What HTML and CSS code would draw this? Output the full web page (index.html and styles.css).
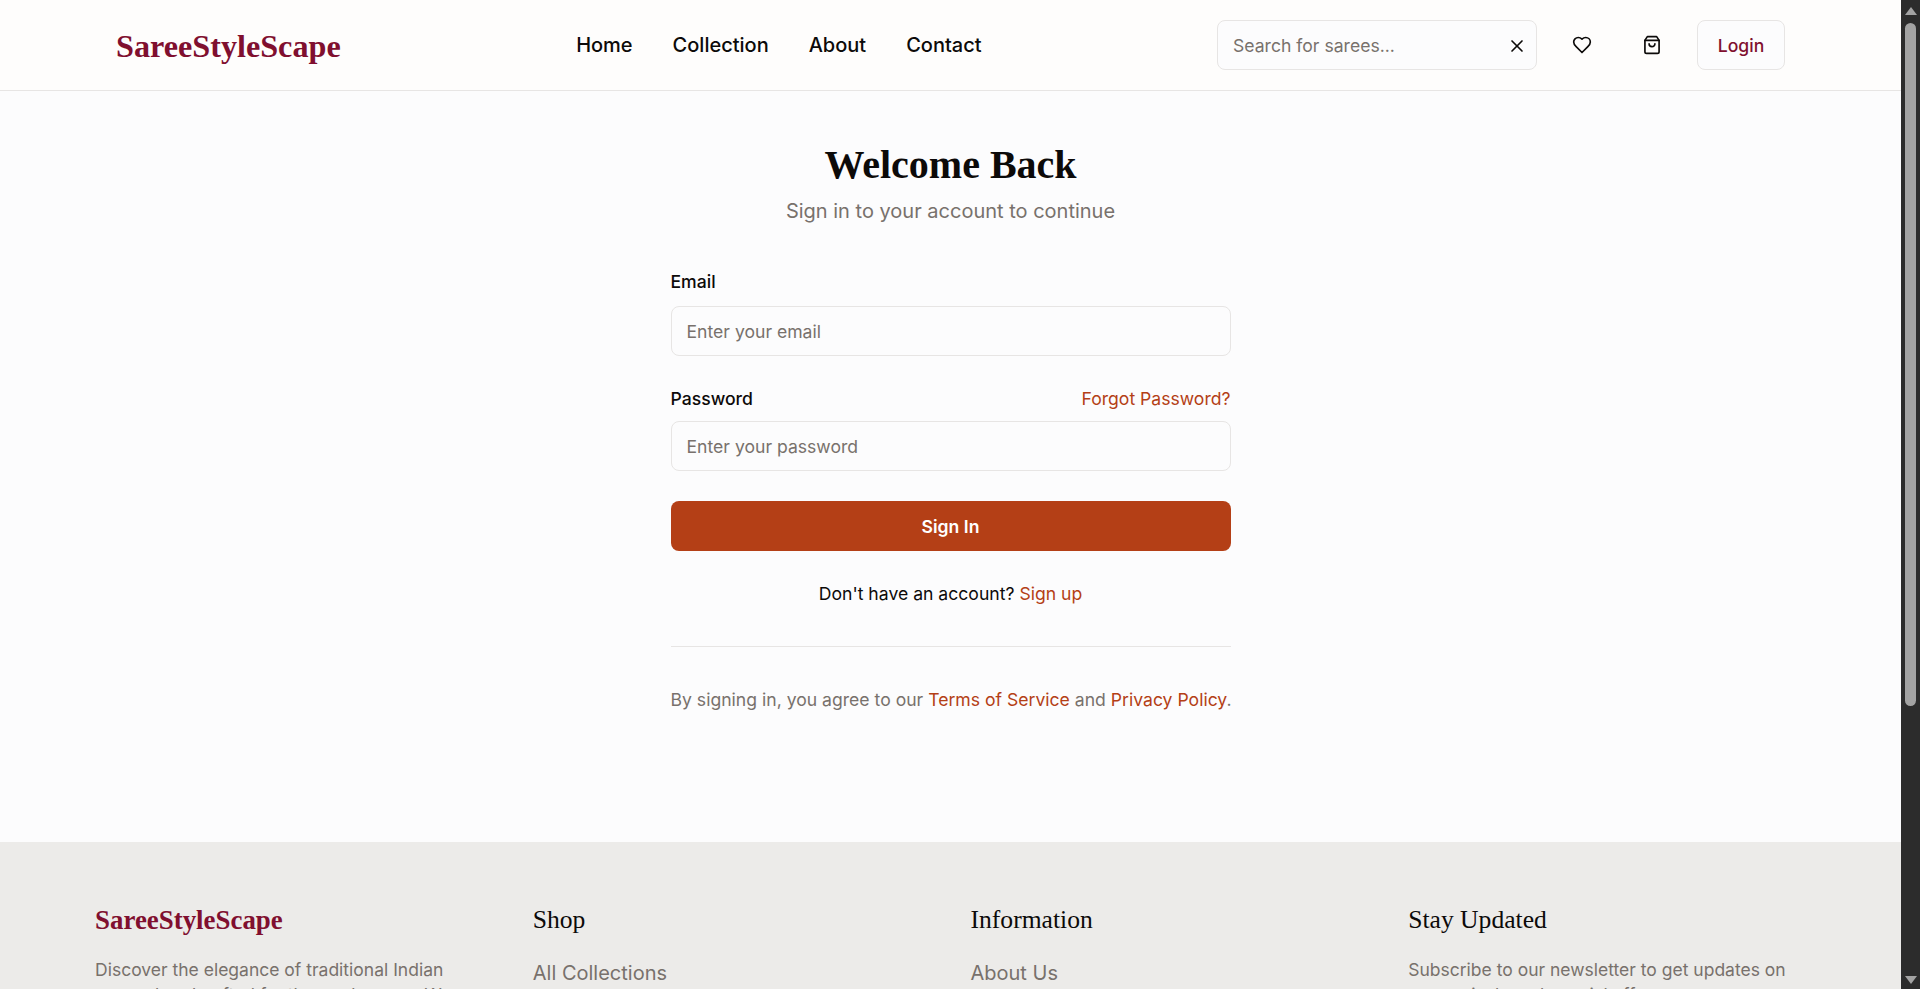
FILE: index.html
```html
<!DOCTYPE html>
<html lang="en">
<head>
<meta charset="utf-8">
<title>SareeStyleScape - Login</title>
<link rel="stylesheet" href="styles.css">
</head>
<body>
<div class="viewport">
  <div class="page">
    <header class="site-header">
      <a class="logo" href="#">SareeStyleScape</a>
      <nav class="main-nav">
        <a href="#">Home</a>
        <a href="#">Collection</a>
        <a href="#">About</a>
        <a href="#">Contact</a>
      </nav>
      <div class="header-actions">
        <div class="search-box">
          <span class="search-placeholder">Search for sarees...</span>
          <svg class="icon-x" viewBox="0 0 24 24" fill="none" stroke="currentColor" stroke-width="2" stroke-linecap="round" stroke-linejoin="round"><path d="M18 6 6 18"/><path d="m6 6 12 12"/></svg>
        </div>
        <button class="icon-btn heart-btn" aria-label="Wishlist">
          <svg viewBox="0 0 24 24" fill="none" stroke="currentColor" stroke-width="2" stroke-linecap="round" stroke-linejoin="round"><path d="M19 14c1.49-1.46 3-3.21 3-5.5A5.5 5.5 0 0 0 16.5 3c-1.76 0-3 .5-4.500 2-1.500-1.500-2.740-2-4.500-2A5.500 5.500 0 0 0 2 8.500c0 2.300 1.500 4.050 3 5.500l7 7Z"/></svg>
        </button>
        <button class="icon-btn bag-btn" aria-label="Cart">
          <svg viewBox="0 0 24 24" fill="none" stroke="currentColor" stroke-width="2" stroke-linecap="round" stroke-linejoin="round"><path d="M7 2h10a1 1 0 0 1 1 .6L20.500 6.500V20a2 2 0 0 1-2 2h-13a2 2 0 0 1-2-2V6.500L6 2.600A1 1 0 0 1 7 2Z"/><path d="M3.500 6.500h17"/><path d="M15.500 10.500a3.500 3.500 0 0 1-7 0"/></svg>
        </button>
        <button class="login-btn">Login</button>
      </div>
    </header>

    <main class="login-main">
      <section class="login-card">
        <h1>Welcome Back</h1>
        <p class="subtitle">Sign in to your account to continue</p>
        <form class="login-form">
          <div class="field">
            <div class="label-row"><label for="email">Email</label></div>
            <input id="email" type="email" placeholder="Enter your email">
          </div>
          <div class="field">
            <div class="label-row"><label for="password">Password</label><a href="#" class="accent">Forgot Password?</a></div>
            <input id="password" type="password" placeholder="Enter your password">
          </div>
          <button type="button" class="submit-btn">Sign In</button>
        </form>
        <p class="signup-line">Don't have an account? <a href="#" class="accent">Sign up</a></p>
        <hr class="divider">
        <p class="terms">By signing in, you agree to our <a href="#" class="accent">Terms of Service</a> and <a href="#" class="accent">Privacy Policy</a>.</p>
      </section>
    </main>

    <footer class="site-footer">
      <div class="footer-grid">
        <div class="footer-col">
          <h2 class="footer-logo">SareeStyleScape</h2>
          <p class="footer-text">Discover the elegance of traditional Indian sarees handcrafted for the modern era. We</p>
        </div>
        <div class="footer-col">
          <h3>Shop</h3>
          <ul><li><a href="#">All Collections</a></li><li><a href="#">New Arrivals</a></li></ul>
        </div>
        <div class="footer-col">
          <h3>Information</h3>
          <ul><li><a href="#">About Us</a></li><li><a href="#">Contact</a></li></ul>
        </div>
        <div class="footer-col">
          <h3>Stay Updated</h3>
          <p class="footer-text">Subscribe to our newsletter to get updates on new arrivals and special offers.</p>
        </div>
      </div>
    </footer>
  </div>

  <div class="scrollbar" aria-hidden="true">
    <span class="arrow arrow-up"></span>
    <span class="thumb"></span>
    <span class="arrow arrow-down"></span>
  </div>
</div>
</body>
</html>
```

FILE: styles.css
```css
* { box-sizing: border-box; }

html, body {
  margin: 0;
  height: 100%;
  overflow: hidden;
}

body {
  font-family: Inter, "Liberation Sans", sans-serif;
  font-size: 17.6px;
  line-height: 24px;
  color: #0c0a09;
  background: #fcfcfd;
}

a { color: inherit; text-decoration: none; }

.viewport {
  display: flex;
  height: 100vh;
}

.page {
  flex: 1;
  min-width: 0;
  overflow: hidden;
}

/* Header */
.site-header {
  display: flex;
  align-items: center;
  justify-content: space-between;
  height: 91px;
  padding: 0 116px;
  background: #fefdfc;
  border-bottom: 1px solid #e7e5e4;
}

.logo {
  font-family: "Liberation Serif", serif;
  font-weight: 700;
  font-size: 32.2px;
  line-height: 40px;
  color: #800f2f;
  margin-top: 1px;
}

.main-nav {
  display: flex;
  gap: 40px;
  font-size: 20px;
  font-weight: 500;
}

.header-actions {
  display: flex;
  align-items: center;
}

.search-box {
  display: flex;
  align-items: center;
  justify-content: space-between;
  width: 320px;
  height: 50px;
  padding: 1px 9px 0 15px;
  background: #fcfcfd;
  border: 1px solid #e7e5e4;
  border-radius: 8px;
}

.search-placeholder { color: #78716c; }

.icon-x { width: 20px; height: 20px; }

.icon-btn {
  display: flex;
  align-items: center;
  justify-content: center;
  width: 40px;
  height: 40px;
  padding: 0;
  color: #0c0a09;
  background: none;
  border: 0;
}

.icon-btn svg { width: 20px; height: 20px; }

.heart-btn { margin: -1px 0 0 25px; }
.bag-btn { margin: 0 25px 0 30px; }

.login-btn {
  width: 88px;
  height: 50px;
  padding: 0;
  font: 500 17.6px Inter, sans-serif;
  color: #800f2f;
  background: #fcfcfd;
  border: 1px solid #e7e5e4;
  border-radius: 8px;
}

/* Login */
.login-main {
  height: 751px;
  padding-top: 51px;
}

.login-card {
  width: 560px;
  margin: 0 auto;
  text-align: center;
}

h1 {
  margin: 0;
  font-family: "Liberation Serif", serif;
  font-size: 40px;
  font-weight: 700;
  line-height: 46px;
}

.subtitle {
  margin: 9px 0 0;
  font-size: 20px;
  line-height: 28px;
  color: #78716c;
}

.login-form {
  margin-top: 45px;
  text-align: left;
}

.field { margin-bottom: 30px; }

.field:first-child { margin-bottom: 31px; }

.label-row {
  display: flex;
  justify-content: space-between;
  margin-bottom: 10px;
}

.field:first-child .label-row { margin-bottom: 12px; }

label { font-weight: 500; }

.accent { color: #b43f16; }

input {
  display: block;
  width: 100%;
  height: 50px;
  padding: 0 15px;
  font: 400 17.6px Inter, sans-serif;
  color: #0c0a09;
  background: #fcfcfd;
  border: 1px solid #e7e5e4;
  border-radius: 8px;
  outline: 0;
}

input::placeholder { color: #78716c; opacity: 1; }

.submit-btn {
  display: block;
  width: 100%;
  height: 50px;
  padding: 0;
  font: 600 17.6px Inter, sans-serif;
  color: #fff;
  background: #b43f16;
  border: 0;
  border-radius: 8px;
}

.signup-line { margin: 31px 0 0; }

.divider {
  height: 1px;
  margin: 40px 0 41px;
  background: #e7e5e4;
  border: 0;
}

.terms {
  margin: 0;
  color: #78716c;
  white-space: nowrap;
}

/* Footer */
.site-footer {
  height: 400px;
  padding: 60px 5% 0;
  background: #ecebe9;
}

.footer-grid {
  display: grid;
  grid-template-columns: repeat(4, 1fr);
  gap: 40px;
}

.footer-logo {
  margin: 0;
  font-family: "Liberation Serif", serif;
  font-size: 26.9px;
  font-weight: 700;
  line-height: 36px;
  color: #800f2f;
}

.footer-col h3 {
  margin: 0;
  font-family: "Liberation Serif", serif;
  font-size: 25.6px;
  font-weight: 400;
  line-height: 36px;
}

.footer-text {
  margin: 19px 0 0;
  font-size: 17.5px;
  line-height: 25px;
  color: #78716c;
}

ul {
  margin: 20px 0 0;
  padding: 0;
  list-style: none;
  font-size: 20px;
  line-height: 30px;
  color: #78716c;
}

li { margin-bottom: 12px; }

/* Window scrollbar, part of the screenshot */
.scrollbar {
  position: relative;
  flex: 0 0 19px;
  display: flex;
  flex-direction: column;
  align-items: center;
  padding: 7px 0 5px;
  background: #2c2c2c;
}

.arrow {
  flex: none;
  width: 0;
  height: 0;
  border-left: 6px solid transparent;
  border-right: 6px solid transparent;
}

.arrow-up { border-bottom: 8px solid #a3a3a3; }
.arrow-down { margin-top: auto; border-top: 8px solid #a3a3a3; }

.thumb {
  width: 11px;
  height: 683px;
  margin-top: 8px;
  background: #a3a3a3;
  border-radius: 6px;
}
```
